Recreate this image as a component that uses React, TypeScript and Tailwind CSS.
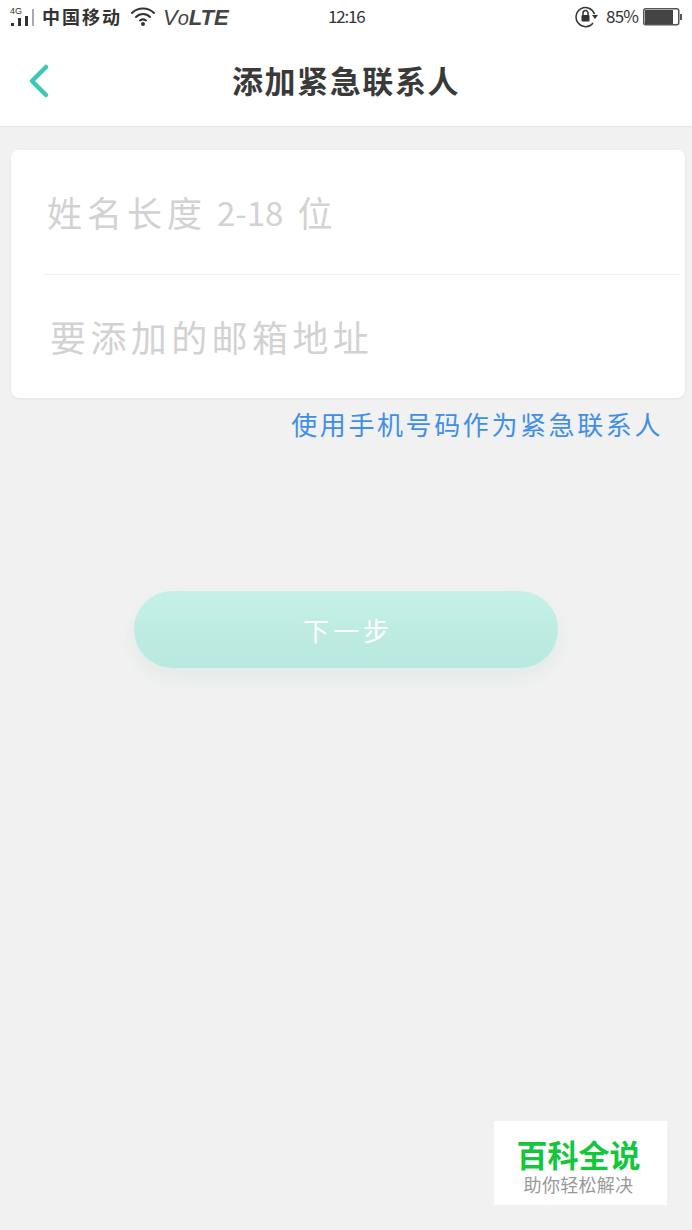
export default function App() {
  const cjk = { fontFamily: '"Noto Sans CJK SC", sans-serif' };
  return (
    <div className="relative w-[692px] h-[1230px] bg-[#f1f1f1] flex flex-col overflow-hidden" style={cjk}>
      <header className="bg-white h-[127px] border-b border-[#e4e4e4] flex flex-col">
        <div className="h-[35px] flex items-center pl-[10px] text-[#333]">
          <div className="relative w-[25px] h-[20px] shrink-0">
            <span className="absolute left-0 -top-[1px] text-[9px] leading-[9px] font-['Liberation_Sans']">4G</span>
            <svg className="absolute left-0 top-0" width="25" height="20" viewBox="0 0 25 20">
              <rect x="1" y="15" width="3" height="3" fill="#333" />
              <rect x="8" y="10" width="3" height="8" fill="#333" />
              <rect x="15" y="8" width="3" height="10" fill="#333" />
              <rect x="22" y="1" width="2" height="17" fill="#aaa" />
            </svg>
          </div>
          <span className="ml-[7px] w-[80px] shrink-0 mb-[4px] text-[18px] leading-[22px] font-bold tracking-[2px] whitespace-nowrap">中国移动</span>
          <svg className="ml-[8px] mb-[1px] shrink-0" width="26" height="20" viewBox="0 0 26 20" fill="none" stroke="#333" strokeWidth="2" strokeLinecap="round">
            <path d="M2 6 C8 0 18 0 24 6" />
            <path d="M6 10 C10 6 16 6 20 10" />
            <path d="M10 13.5 C12 12 14 12 16 13.5" />
            <circle cx="13" cy="17" r="1" fill="#333" />
          </svg>
          <span className="ml-[7px] w-[66px] shrink-0 mt-[1px] font-['Liberation_Sans'] italic text-[22px] leading-[24px] text-[#444] whitespace-nowrap">V<span className="text-[20px]">o</span><span className="font-bold">LTE</span></span>
          <span className="ml-[99px] w-[36px] shrink-0 mb-[4px] text-[17px] leading-[20px] whitespace-nowrap tracking-[-1.2px]">12:16</span>
          <svg className="ml-[211px] mb-[1px] shrink-0" width="24" height="22" viewBox="0 0 24 22" fill="none">
            <path d="M18 17 A9.5 9.5 0 1 1 19.5 8" stroke="#333" strokeWidth="1.5" />
            <path d="M17 9 L23 9 L20 13 Z" fill="#333" />
            <rect x="6.5" y="9" width="8" height="6.5" rx="1" fill="#333" />
            <path d="M8 9 V7 A2.5 2.5 0 0 1 13 7 V9" stroke="#333" strokeWidth="1.5" />
          </svg>
          <span className="ml-[7px] w-[32px] shrink-0 mb-[4px] text-[17px] leading-[20px] whitespace-nowrap tracking-[-0.8px]">85%</span>
          <svg className="ml-[5px] mb-[1px] shrink-0" width="39" height="18" viewBox="0 0 39 18" fill="none">
            <rect x="0.75" y="0.75" width="35" height="16" rx="2" stroke="#555" strokeWidth="1.5" />
            <rect x="2" y="2" width="28" height="14" fill="#444" />
            <rect x="37" y="6" width="2" height="6" fill="#555" />
          </svg>
        </div>
        <div className="flex-1 relative flex items-center justify-center pb-[2px]">
          <svg className="absolute left-[27px] top-[28px]" width="24" height="36" viewBox="0 0 24 36" fill="none">
            <path d="M19 4 L5 18 L19 32" stroke="#3cc8b4" strokeWidth="4.5" strokeLinecap="round" strokeLinejoin="round" />
          </svg>
          <h1 className="text-[31px] leading-[40px] font-bold text-[#3a3a3a] tracking-[1.6px] whitespace-nowrap">添加紧急联系人</h1>
        </div>
      </header>

      <section className="mt-[23px] mx-[11px] w-[674px] h-[248px] bg-white rounded-[8px] shadow-[0_1px_3px_rgba(0,0,0,0.06)] flex flex-col pl-[33px]">
        <div className="h-[125px] mr-[5px] border-b border-[#f0f0f0] flex items-center pl-[3px] text-[35px] leading-[40px] text-[#d2d2d2] tracking-[5px] whitespace-nowrap">
          <span>姓名长度</span>
          <span className="ml-[10px] text-[33px] tracking-[0px]">2-18</span>
          <span className="ml-[14px] tracking-[0px]">位</span>
        </div>
        <div className="flex-1 flex items-center text-[36px] leading-[40px] text-[#d2d2d2] tracking-[4.4px] whitespace-nowrap pl-[6px] pb-[2px]">
          要添加的邮箱地址
        </div>
      </section>

      <div className="mt-[8px] pr-[29px] text-right text-[26px] leading-[36px] text-[#3f8fe6] tracking-[2.6px] whitespace-nowrap">
        使用手机号码作为紧急联系人
      </div>

      <button className="mt-[149px] mx-auto w-[424px] h-[77px] rounded-[38px] bg-gradient-to-b from-[#c4f0e7] to-[#b8e8df] shadow-[0_10px_18px_rgba(170,210,205,0.2)] text-white text-[26px] leading-[36px] tracking-[4px] pl-[4px] flex items-center justify-center">
        下一步
      </button>

      <div className="absolute left-[494px] top-[1121px] w-[173px] h-[84px] bg-white flex flex-col items-center pr-[4px]">
        <span className="mt-[15px] h-[36px] text-[31px] leading-[36px] font-bold text-[#14c63c] whitespace-nowrap">百科全说</span>
        <span className="h-[24px] text-[18px] leading-[24px] tracking-[0.3px] text-[#999] whitespace-nowrap">助你轻松解决</span>
      </div>
    </div>
  );
}
